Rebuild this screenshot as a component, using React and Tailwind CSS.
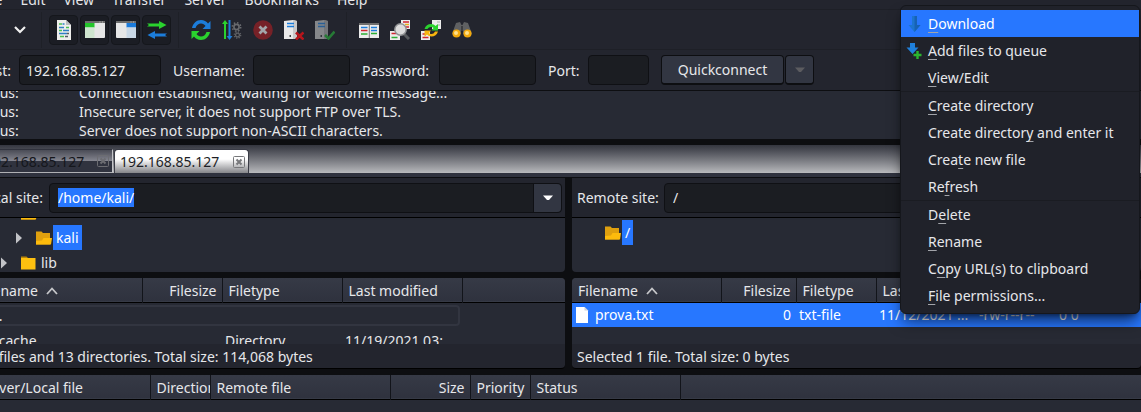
import { useEffect, useRef } from "react";

const menus = ["File", "Edit", "View", "Transfer", "Server", "Bookmarks", "Help"];

const log = [
  "Connection established, waiting for welcome message...",
  "Insecure server, it does not support FTP over TLS.",
  "Server does not support non-ASCII characters.",
];

const contextGroups = [
  [
    { before: "", key: "D", after: "ownload", icon: "down", active: true },
    { before: "", key: "A", after: "dd files to queue", icon: "add" },
    { before: "", key: "V", after: "iew/Edit" },
  ],
  [
    { before: "", key: "C", after: "reate directory" },
    { before: "Create director", key: "y", after: " and enter it" },
    { before: "Crea", key: "t", after: "e new file" },
    { before: "Re", key: "f", after: "resh" },
  ],
  [
    { before: "D", key: "e", after: "lete" },
    { before: "", key: "R", after: "ename" },
    { before: "C", key: "o", after: "py URL(s) to clipboard" },
    { before: "", key: "F", after: "ile permissions..." },
  ],
];

function Svg({ children, className = "size-5" }) {
  return (
    <svg viewBox="0 0 20 20" className={`${className} shrink-0`} aria-hidden="true">
      {children}
    </svg>
  );
}

const SitesIcon = () => (
  <Svg>
    <rect x="2" y="1" width="13" height="18" fill="#e4e4e4" />
    <path d="M5 4h7M5 7h7" stroke="#1f7bd8" strokeWidth="1.5" />
  </Svg>
);

const LogIcon = () => (
  <Svg>
    <path d="M3 0h9l5 5v15H3z" fill="#eeeeec" />
    <path d="M12 0v5h5z" fill="#b9bcbe" />
    <path d="M5 4h3M5 10.500h3M12 7.500h3M6 16.500h4" stroke="#4cc152" strokeWidth="1.300" />
    <path d="M8.500 4h2M5 7.500h5M9 10.500h6M5 13.500h8" stroke="#2f7fc4" strokeWidth="1.300" />
    <path d="M13 13.500h2M11 16.500h3" stroke="#555d63" strokeWidth="1.300" />
  </Svg>
);

const LocalTreeIcon = () => (
  <Svg>
    <rect x="0" y="1" width="20" height="17" rx="1" fill="#e6e6e6" />
    <rect x="0" y="1" width="20" height="2" fill="#6d6d6d" />
    <rect x="0" y="3" width="9.500" height="4.500" fill="#24c52b" />
    <rect x="0" y="7.500" width="9.500" height="10.500" fill="#cfe5cf" />
    <path d="M14.500 2h1M17 2h1" stroke="#bbb" />
  </Svg>
);

const RemoteTreeIcon = () => (
  <Svg>
    <rect x="0" y="1" width="20" height="17" rx="1" fill="#e6e6e6" />
    <rect x="0" y="1" width="20" height="2" fill="#6d6d6d" />
    <rect x="10.500" y="3" width="9.500" height="4.500" fill="#1b7bdb" />
    <rect x="10.500" y="7.500" width="9.500" height="10.500" fill="#c9d7e5" />
    <path d="M14.500 2h1M17 2h1" stroke="#bbb" />
  </Svg>
);

const QueueIcon = () => (
  <Svg>
    <path d="M0 3.500h12V1l7.500 4-7.500 4V6.500H0l2-1.500z" fill="#2ad22e" />
    <path d="M20 13.500H8V11L.5 15 8 19v-2.500h12L18 15z" fill="#1c7ddb" />
  </Svg>
);

const RefreshIcon = () => (
  <Svg>
    <path d="M1 8C2 3.500 5.500 0 10 0c3 0 5.500 1.500 7 3.500L19.500 1v8h-8l3-3C13.500 4.500 12 3.500 10 3.500 7.500 3.500 5.500 5 4.500 8z" fill="#1c7ddb" />
    <path d="M19 12c-1 4.500-4.500 8-9 8-3 0-5.500-1.500-7-3.500L.5 19v-8h8l-3 3c1 1.500 2.500 2.500 4.500 2.500 2.500 0 4.500-1.500 5.500-4.500z" fill="#2ad22e" />
  </Svg>
);

const ProcessIcon = () => (
  <Svg>
    <path d="M3 0L0 4h2v15h2V4h2z" fill="#2ad22e" />
    <path d="M6.500 0h2v16h2l-3 4-3-4h2z" fill="#1c7ddb" />
    <circle cx="14.500" cy="7" r="2.600" fill="none" stroke="#686a6e" strokeWidth="1.600" />
    <circle cx="14.500" cy="7" r="4.200" fill="none" stroke="#686a6e" strokeWidth="1.600" strokeDasharray="1.500 1.800" />
    <circle cx="15.500" cy="15" r="1.900" fill="none" stroke="#606266" strokeWidth="1.300" />
    <circle cx="15.500" cy="15" r="3.200" fill="none" stroke="#606266" strokeWidth="1.300" strokeDasharray="1.200 1.313" />
  </Svg>
);

const CancelIcon = () => (
  <Svg>
    <circle cx="10" cy="10" r="9.800" fill="#762127" />
    <path d="M6.500 6.500l7 7M13.500 6.500l-7 7" stroke="#a4a6aa" strokeWidth="2.800" />
  </Svg>
);

const DisconnectIcon = () => (
  <Svg>
    <path d="M0 1l9-1 4 1v18H0z" fill="#e9e9e9" />
    <path d="M9 0l4 1v18H9z" fill="#c9c9c9" />
    <path d="M3 3.500h7M3 6.500h7" stroke="#1c7ddb" strokeWidth="1.500" />
    <rect x="5.500" y="15" width="1.500" height="2" fill="#444" />
    <path d="M12 12.500l7.500 7M19.500 12.500l-7.500 7" stroke="#b7151b" strokeWidth="2.600" />
  </Svg>
);

const ReconnectIcon = () => (
  <Svg>
    <path d="M0 1l9-1 4 1v18H0z" fill="#85878a" />
    <path d="M9 0l4 1v18H9z" fill="#74767a" />
    <path d="M3 3.500h7M3 6.500h7" stroke="#2a5f96" strokeWidth="1.500" />
    <rect x="5.500" y="15" width="1.500" height="2" fill="#33363c" />
    <path d="M10 15l3.500 3.500 6-7" fill="none" stroke="#267a35" strokeWidth="2.600" />
  </Svg>
);

const FilterIcon = () => (
  <Svg>
    <rect x="0" y="3" width="20" height="15" fill="#ececec" />
    <rect x="0" y="3" width="20" height="2" fill="#6d6d6d" />
    <path d="M2 7.500h6.500M12 10.500h6" stroke="#1c7ddb" strokeWidth="1.500" />
    <path d="M12 7.500h6" stroke="#1c7ddb" strokeWidth="1.500" />
    <path d="M2 10.500h6.500" stroke="#d22530" strokeWidth="1.500" />
    <path d="M2 14h6.500M12 13.500h6" stroke="#2cae35" strokeWidth="1.500" />
    <path d="M10.300 4v14" stroke="#777" strokeWidth="1" />
  </Svg>
);

const CompareIcon = () => (
  <Svg>
    <rect x="11" y="0" width="9" height="9" fill="#ececec" />
    <path d="M13 2h6M15 7h4" stroke="#d22530" strokeWidth="1.500" />
    <path d="M15 4.500h4" stroke="#e8b21f" strokeWidth="1.500" />
    <rect x="0" y="11" width="10" height="9" fill="#ececec" />
    <path d="M1.500 13.500h5" stroke="#d22530" strokeWidth="1.500" />
    <path d="M1.500 17.500h6" stroke="#2cae35" strokeWidth="1.500" />
    <path d="M14 14l5 5" stroke="#55585c" strokeWidth="3" />
    <circle cx="10.500" cy="9.500" r="5.700" fill="#dcdcdc" stroke="#909294" strokeWidth="1.500" />
  </Svg>
);

const SyncIcon = () => (
  <Svg>
    <rect x="11" y="0" width="9" height="9" fill="#ececec" />
    <path d="M16 2h3M17 5h2" stroke="#aaa" />
    <rect x="0" y="11" width="9" height="9" fill="#ececec" />
    <path d="M1.500 14h3M1.500 17.500h6" stroke="#d22530" strokeWidth="1.300" />
    <path d="M3.500 9C4.500 5.500 7 4 10 4c2 0 3.500.8 4.500 2L17 4v6.500h-6.500L12.500 8C12 7.300 11 7 10 7 8.500 7 7.300 7.800 6.500 9z" fill="#2ad22e" />
    <path d="M17 11.500c-1 3.500-3.500 5-6.500 5-2 0-3.500-.8-4.500-2L3.500 17v-6.500H10L8 13c.5.7 1.500 1 2.500 1 1.500 0 2.700-.8 3.500-2.500z" fill="#f6b40e" />
  </Svg>
);

const FindIcon = () => (
  <Svg>
    <path d="M4 3l4-1 1.500 3h1L12 2l4 1 4 11-4 3-5-3v-4H9v4l-5 3-4-3z" fill="#5f6062" />
    <path d="M9 6h2v5H9z" fill="#3c3d40" />
    <circle cx="4.500" cy="13.500" r="4" fill="#f3a90c" />
    <circle cx="15.500" cy="13.500" r="4" fill="#f3a90c" />
    <circle cx="4" cy="13" r="2" fill="#ffe08a" />
    <circle cx="15" cy="13" r="2" fill="#ffe08a" />
  </Svg>
);

function FolderIcon({ open }) {
  return (
    <svg viewBox="0 0 16 14" className="h-3.5 w-4 shrink-0" aria-hidden="true">
      {open ? (
        <>
          <path d="M0 13.500V.5h5.500L7 2h7v11.500z" fill="#dfa00f" />
          <path d="M0 13.500V10l6-.5L7.500 7H16l-1 6.500z" fill="#fdbb0c" />
        </>
      ) : (
        <>
          <path d="M0 13.500V2h14.500v11.500z" fill="#fdc010" />
          <path d="M0 .5h5.500L7 2H0z" fill="#b98509" />
        </>
      )}
    </svg>
  );
}

function Caret() {
  return (
    <svg viewBox="0 0 10 6" className="h-1.5 w-2.5" aria-hidden="true">
      <path d="M0 .5h10L6 5H4z" fill="currentColor" />
    </svg>
  );
}

function Expander() {
  return (
    <svg viewBox="0 0 6 12" className="h-3 w-1.5 shrink-0" aria-hidden="true">
      <path d="M0 .5v11L6 6z" fill="#c2c3c7" />
    </svg>
  );
}

function SortArrow() {
  return (
    <svg viewBox="0 0 12 8" className="h-2 w-3 shrink-0" aria-hidden="true">
      <path d="M1 7l5-5.500L11 7" fill="none" stroke="#c6c7ca" strokeWidth="1.800" />
    </svg>
  );
}

function ToolButton({ label, pressed, children }) {
  const base = "flex h-[30px] w-[29px] shrink-0 items-center justify-center rounded";
  return (
    <button
      type="button"
      aria-label={label}
      aria-pressed={pressed}
      className={pressed ? `${base} border border-[#15171c] bg-[#1b1d24]` : base}
    >
      {children}
    </button>
  );
}

const Divider = () => <span className="mx-[5px] h-9 w-px shrink-0 bg-[#1e2027]" />;

function Field({ id, label, labelClass, inputClass, value = "" }) {
  return (
    <div className="flex shrink-0 items-center">
      <label htmlFor={id} className={`shrink-0 ${labelClass}`}>
        {label}
      </label>
      <input
        id={id}
        defaultValue={value}
        className={`h-[30px] shrink-0 rounded border border-[#0f1014] bg-[#1b1d22] px-1.5 outline-none ${inputClass}`}
      />
    </div>
  );
}

function Tab({ active }) {
  return (
    <div
      className={
        active
          ? "flex h-6 w-[135px] shrink-0 items-center justify-between rounded-t border-x border-t border-[#3a3c46] bg-linear-to-b from-white from-40% to-[#85868a] pr-[3px] pl-[5px] text-[#1d1f26]"
          : "flex h-6 w-[135px] shrink-0 items-center justify-between border-t border-r border-b border-t-[#30323c] border-r-[#c4c5c9] border-b-[#b0b1b5] bg-linear-to-b from-[#4a4c56] from-0% via-[#858690] via-50% to-[#30333f] to-50% pr-[3px] pl-[7px] text-[#15171c]"
      }
    >
      <button type="button" role="tab" aria-selected={active}>
        192.168.85.127
      </button>
      <button type="button" aria-label="Close tab">
        <svg viewBox="0 0 12 12" className="size-3" fill="none" stroke={active ? "#77787b" : "#6c6d72"} aria-hidden="true">
          <rect x=".5" y=".5" width="11" height="11" rx="1" />
          <path d="M3.500 3.500l5 5M8.500 3.500l-5 5" strokeWidth="2" />
        </svg>
      </button>
    </div>
  );
}

function SiteBar({ id, label, value, inputRef, labelClass }) {
  return (
    <div className="flex h-10 shrink-0 items-center border-b border-black bg-[#23252e] pr-[3px]">
      <label htmlFor={id} className={`shrink-0 ${labelClass}`}>
        {label}
      </label>
      <div className="flex h-[30px] min-w-0 flex-1 rounded border border-[#0f1014] bg-[#1b1d22]">
        <input
          ref={inputRef}
          id={id}
          defaultValue={value}
          className="min-w-0 flex-1 bg-transparent px-2 outline-none selection:bg-[#2777ff] selection:text-white"
        />
        <button
          type="button"
          aria-label={`${label} history`}
          className="flex w-7 shrink-0 items-center justify-center rounded-r border-l border-[#0f1014] bg-[#323642] text-white"
        >
          <Caret />
        </button>
      </div>
    </div>
  );
}

const th = "h-6 overflow-hidden border-r border-[#12141a] pt-0.5 pr-0 pl-1.5 text-left font-normal whitespace-nowrap";
const thRight = "h-6 overflow-hidden border-r border-[#12141a] pt-0.5 pr-[5px] text-right font-normal whitespace-nowrap";
const headRow = "border-b border-black bg-linear-to-b from-[#363a46] to-[#2f323e]";

function Splitter() {
  return <div className="h-1.5 shrink-0 bg-[#0d0e11]" />;
}

function SortedHeading() {
  return (
    <th className={th} aria-sort="ascending">
      <span className="flex items-center gap-2">
        Filename
        <SortArrow />
      </span>
    </th>
  );
}

function LocalPane({ inputRef }) {
  return (
    <section className="flex min-w-0 flex-[593] flex-col">
      <SiteBar id="local" label="Local site:" value="/home/kali/" inputRef={inputRef} labelClass="w-[77px] pr-1.5 text-right" />
      <div className="flex h-[54px] shrink-0 flex-col justify-end overflow-hidden rounded-b bg-[#272a34]">
        <ul className="-mb-[3px] shrink-0">
          <li className="flex h-[25px] items-center pl-[49px]">
            <FolderIcon open />
          </li>
          <li className="flex h-[25px] items-center pl-11">
            <Expander />
            <span className="ml-3.5">
              <FolderIcon open />
            </span>
            <span className="ml-px h-[25px] bg-[#2777ff] px-[3px] leading-[25px] text-white">kali</span>
          </li>
          <li className="flex h-[25px] items-center pl-[29px]">
            <Expander />
            <span className="ml-3.5">
              <FolderIcon />
            </span>
            <span className="ml-1">lib</span>
          </li>
        </ul>
      </div>
      <Splitter />
      <div className="h-[66px] shrink-0 overflow-hidden rounded-t bg-[#272a34]">
        <table className="w-full table-fixed border-collapse">
          <colgroup>
            <col className="w-[170px]" />
            <col className="w-20" />
            <col className="w-[120px]" />
            <col className="w-[120px]" />
            <col />
          </colgroup>
          <thead>
            <tr className={headRow}>
              <SortedHeading />
              <th className={thRight}>Filesize</th>
              <th className={th}>Filetype</th>
              <th className={th}>Last modified</th>
              <td />
            </tr>
          </thead>
          <tbody>
            <tr className="h-[25px]">
              <td colSpan={4} className="pt-0.5 pr-0.5">
                <div className="h-[21px] rounded-sm border-2 border-[#323540] pl-[21px] leading-[18px]">..</div>
              </td>
            </tr>
            <tr className="h-[25px]">
              <td className="pt-0.5 pl-[23px]">.cache</td>
              <td />
              <td className="pt-0.5 pl-[3px]">Directory</td>
              <td className="overflow-hidden pt-0.5 pl-[3px] whitespace-nowrap">11/19/2021 03:</td>
            </tr>
          </tbody>
        </table>
      </div>
      <div className="flex h-[25px] shrink-0 items-center rounded-b border-b border-black bg-[#23252e] pl-[7px] whitespace-nowrap">
        17 files and 13 directories. Total size: 114,068 bytes
      </div>
    </section>
  );
}

function RemotePane() {
  return (
    <section className="flex min-w-0 flex-[569] flex-col">
      <SiteBar id="remote" label="Remote site:" value="/" labelClass="w-[92px] pl-[5px]" />
      <div className="h-[54px] shrink-0 overflow-hidden rounded-b bg-[#272a34] pt-0.5">
        <div className="flex h-[25px] items-center pl-[33px]">
          <FolderIcon open />
          <span className="ml-px h-[25px] bg-[#2777ff] px-[3px] leading-[25px] text-white">/</span>
        </div>
      </div>
      <Splitter />
      <div className="h-[66px] shrink-0 overflow-hidden rounded-t bg-[#272a34]">
        <table className="w-full table-fixed border-collapse">
          <colgroup>
            <col className="w-[149px]" />
            <col className="w-[75px]" />
            <col className="w-20" />
            <col className="w-[100px]" />
            <col className="w-20" />
            <col />
          </colgroup>
          <thead>
            <tr className={headRow}>
              <SortedHeading />
              <th className={thRight}>Filesize</th>
              <th className={th}>Filetype</th>
              <th className={th}>Last modified</th>
              <th className={th}>Permissions</th>
              <th className={th}>Owner/Group</th>
            </tr>
          </thead>
          <tbody>
            <tr className="h-[25px] bg-[#2777ff] text-white">
              <td className="pl-1">
                <span className="flex items-center gap-1.5">
                  <svg viewBox="0 0 13 16" className="h-4 w-[13px]" aria-hidden="true">
                    <path d="M0 0h8.500L12 3.500V16H0z" fill="#fff" />
                    <path d="M8.500 0L12 3.500H8.500z" fill="#d0d3d8" />
                  </svg>
                  prova.txt
                </span>
              </td>
              <td className="pr-[5px] text-right">0</td>
              <td className="pl-[3px]">txt-file</td>
              <td className="pl-[3px]">11/12/2021 ...</td>
              <td className="pl-[3px]">-rw-r--r--</td>
              <td className="pl-[3px]">0 0</td>
            </tr>
          </tbody>
        </table>
      </div>
      <div className="flex h-[25px] shrink-0 items-center rounded-b border-b border-black bg-[#23252e] pl-[5px] whitespace-nowrap">
        Selected 1 file. Total size: 0 bytes
      </div>
    </section>
  );
}

function ContextMenu() {
  return (
    <div
      role="menu"
      className="absolute top-[5px] left-[900px] w-60 rounded-md border border-[#15171c] bg-[#20222a] py-1 shadow-lg shadow-black/60"
    >
      {contextGroups.map((group, i) => (
        <div key={i} className={i ? "border-t border-[#1a1c22]" : ""}>
          {group.map((item) => (
            <button
              key={item.before + item.key + item.after}
              type="button"
              role="menuitem"
              className={
                item.active
                  ? "flex h-[27px] w-full items-center bg-[#2777ff] pl-[5px] text-left text-white"
                  : "flex h-[27px] w-full items-center pl-[5px] text-left"
              }
            >
              <span className="flex w-[22px] shrink-0">
                {item.icon === "down" && (
                  <svg viewBox="0 0 16 16" className="size-4" aria-hidden="true">
                    <path d="M6 0h5v9h3.500l-6 7-6-7H6z" fill="#1c74d0" />
                    <path d="M8.500 0H11v9h3.500l-6 7z" fill="#1762b4" />
                  </svg>
                )}
                {item.icon === "add" && (
                  <svg viewBox="0 0 16 16" className="size-4" aria-hidden="true">
                    <path d="M4 0h5v4.500h3.500L6.500 11l-6-6.500H4z" fill="#1f80dc" />
                    <path d="M11.500 8v8M7.500 12h8" stroke="#2bb52f" strokeWidth="2.400" />
                  </svg>
                )}
              </span>
              <span className="whitespace-nowrap">
                {item.before}
                <span className="underline decoration-[#a2a4a9] decoration-1 underline-offset-3 [text-decoration-skip-ink:none]">
                  {item.key}
                </span>
                {item.after}
              </span>
            </button>
          ))}
        </div>
      ))}
    </div>
  );
}

export default function App() {
  const localRef = useRef(null);
  useEffect(() => {
    localRef.current?.focus();
    localRef.current?.select();
  }, []);

  return (
    <div className="relative min-h-screen overflow-hidden bg-[#272a34] font-['Noto_Sans',sans-serif] text-sm leading-[19px] text-[#e6e7ea]">
      <div className="-ml-7 flex min-h-screen flex-col">
        <nav className="flex h-2.5 shrink-0 items-end gap-[18px] overflow-hidden border-b border-[#1e2027] bg-[#23252e] pl-2">
          {menus.map((name) => (
            <button key={name} type="button" className="shrink-0">
              {name}
            </button>
          ))}
        </nav>

        <div className="flex h-10 shrink-0 items-center gap-0.5 border-b border-[#1e2027] bg-[#23252e] pl-0.5">
          <ToolButton label="Site manager">
            <SitesIcon />
          </ToolButton>
          <button type="button" aria-label="Recent sites" className="flex h-7 w-[29px] shrink-0 items-center justify-center">
            <svg viewBox="0 0 12 8" className="h-2 w-3" fill="none" stroke="#f0f0f0" strokeWidth="2.200" aria-hidden="true">
              <path d="M1 1l5 5 5-5" />
            </svg>
          </button>
          <Divider />
          <ToolButton label="Message log" pressed>
            <LogIcon />
          </ToolButton>
          <ToolButton label="Local tree" pressed>
            <LocalTreeIcon />
          </ToolButton>
          <ToolButton label="Remote tree" pressed>
            <RemoteTreeIcon />
          </ToolButton>
          <ToolButton label="Transfer queue" pressed>
            <QueueIcon />
          </ToolButton>
          <Divider />
          <ToolButton label="Refresh">
            <RefreshIcon />
          </ToolButton>
          <ToolButton label="Process queue">
            <ProcessIcon />
          </ToolButton>
          <ToolButton label="Cancel">
            <CancelIcon />
          </ToolButton>
          <ToolButton label="Disconnect">
            <DisconnectIcon />
          </ToolButton>
          <ToolButton label="Reconnect">
            <ReconnectIcon />
          </ToolButton>
          <Divider />
          <ToolButton label="Filters">
            <FilterIcon />
          </ToolButton>
          <ToolButton label="Compare directories">
            <CompareIcon />
          </ToolButton>
          <ToolButton label="Synchronized browsing">
            <SyncIcon />
          </ToolButton>
          <ToolButton label="Find files">
            <FindIcon />
          </ToolButton>
        </div>

        <form className="flex h-[41px] shrink-0 items-center gap-3 border-b border-[#0d0e11] bg-[#23252e]">
          <Field id="host" label="Host:" labelClass="w-[47px] pr-2 text-right" inputClass="w-[142px]" value="192.168.85.127" />
          <Field id="user" label="Username:" labelClass="w-20" inputClass="w-[97px]" />
          <Field id="pass" label="Password:" labelClass="w-[77px]" inputClass="w-[97px]" />
          <Field id="port" label="Port:" labelClass="w-10" inputClass="w-[61px]" />
          <div className="flex gap-px">
            <button
              type="button"
              className="h-[30px] w-[123px] rounded border border-b-2 border-[#0d0e11] bg-[#323642]"
            >
              Quickconnect
            </button>
            <button
              type="button"
              aria-label="Quickconnect history"
              className="flex h-[30px] w-[29px] items-center justify-center rounded border border-b-2 border-[#0d0e11] bg-[#323642] text-[#5c5c60]"
            >
              <Caret />
            </button>
          </div>
        </form>

        <div className="flex h-12 shrink-0 flex-col justify-end overflow-hidden bg-[#272a34]">
          <div className="-mb-px shrink-0">
            {log.map((line) => (
              <div key={line} className="flex h-[19px]">
                <span className="w-[107px] shrink-0 pl-0.5">Status:</span>
                <span className="whitespace-nowrap">{line}</span>
              </div>
            ))}
          </div>
        </div>
        <Splitter />

        <div
          role="tablist"
          className="flex h-7 shrink-0 items-end gap-px bg-linear-to-b from-[#34363f] to-[#b9babd] pl-1.5"
        >
          <Tab active={false} />
          <Tab active />
        </div>
        <div className="h-[5px] shrink-0 border-b border-[#0d0e11] bg-[#2f323e]" />

        <main className="flex shrink-0 gap-[7px] bg-[#0d0e11]">
          <LocalPane inputRef={localRef} />
          <RemotePane />
        </main>
        <Splitter />

        <table className="w-full table-fixed border-collapse">
          <colgroup>
            <col className="w-[178px]" />
            <col className="w-[60px]" />
            <col className="w-[180px]" />
            <col className="w-20" />
            <col className="w-[60px]" />
            <col className="w-[150px]" />
            <col />
          </colgroup>
          <thead>
            <tr className={headRow}>
              <th className={th}>Server/Local file</th>
              <th className={th}>Direction</th>
              <th className={th}>Remote file</th>
              <th className={thRight}>Size</th>
              <th className={th}>Priority</th>
              <th className={th}>Status</th>
              <td />
            </tr>
          </thead>
        </table>
      </div>
      <ContextMenu />
    </div>
  );
}
